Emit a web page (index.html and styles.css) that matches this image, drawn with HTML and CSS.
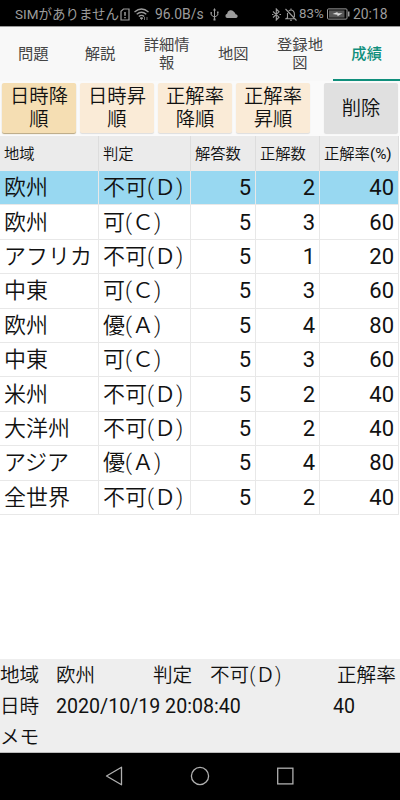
FILE: index.html
```html
<!DOCTYPE html>
<html lang="ja">

<head>
    <meta charset="UTF-8">
    <meta name="viewport" content="width=device-width, initial-scale=1.0">
    <title>成績</title>
    <link rel="stylesheet" href="styles.css">
</head>

<body>
    <header class="status">
        <span class="carrier">SIMがありません</span>
        <svg class="sim" width="10" height="13" viewBox="0 0 10 13" fill="none" stroke="#9c9c9c" stroke-width="1.2">
            <path d="M1 3.2V12h8V1H3.5z" />
            <path d="M5 4v3.7M5 9v1.3" stroke-width="1.5" />
        </svg>
        <svg class="wifi" width="15" height="12" viewBox="0 0 15 12" fill="none" stroke="#9c9c9c" stroke-width="1.3">
            <path d="M.5 4q7-6 14 0M2.7 6.3q4.8-4.2 9.6 0M4.8 8.4q2.7-2.2 5.4 0" />
            <path d="M6 10l1.5 1.6L9 10q-1.5-1-3 0zM10.5 9v3M13 9v3" fill="#9c9c9c" stroke-width=".7" />
        </svg>
        <span class="speed">96.0B/s</span>
        <svg class="usb" width="9" height="13" viewBox="0 0 9 13" fill="none" stroke="#9c9c9c">
            <path d="M4.5 2v9M1.2 5v2l3.3 2.3L7.8 7V4.5" />
            <path d="M3 2.5L4.5 0 6 2.5zM3.5 10.5h2v2h-2zM.5 4h1.4v1.4H.5zM7.1 3.5h1.4v1.4H7.1z" fill="#9c9c9c" stroke="none" />
        </svg>
        <svg class="cloud" width="13" height="8" viewBox="0 0 13 8" fill="#9c9c9c">
            <path d="M2.2 8a2.2 2.2 0 0 1-.1-4.3A3.8 3.8 0 0 1 9.1 2a3 3 0 0 1 1.4 2.3A1.9 1.9 0 0 1 11.3 8z" />
        </svg>
        <svg class="bluetooth" width="9" height="13" viewBox="0 0 9 13" fill="none" stroke="#9c9c9c" stroke-width="1.1">
            <path d="M1 3.5l6 5.7-2.7 2.8V1L7 3.8 1 9.5M0 6.5h1.5M7.5 6.5H9" />
        </svg>
        <svg class="bell" width="12" height="13" viewBox="0 0 12 13" fill="none" stroke="#9c9c9c" stroke-width="1.1">
            <path d="M3.8 2.9Q6 1 8.2 2.9 9.4 4 9.4 6v3M2.5 5v4.6L1 10.7h9.5M5 12.2h2M6 .5V2M.5 1l11 11.5" />
        </svg>
        <span class="percent">83%</span>
        <svg class="battery" width="23" height="12" viewBox="0 0 23 12">
            <rect x=".5" y=".9" width="19.5" height="10.2" rx="1" fill="none" stroke="#9c9c9c" />
            <rect x="2" y="2.4" width="15.5" height="7.2" fill="#555" />
            <path d="M5.5 6l5-2v1.3h5l-5 2.9V6.8z" fill="#ddd" />
            <path d="M21 3.5h1.5v5H21z" fill="#9c9c9c" />
        </svg>
        <span class="clock">20:18</span>
    </header>

    <nav class="tabs">
        <a class="tab">問題</a>
        <a class="tab">解説</a>
        <a class="tab">詳細情<br>報</a>
        <a class="tab">地図</a>
        <a class="tab">登録地<br>図</a>
        <a class="tab active">成績</a>
    </nav>

    <div class="buttons">
        <button class="sort selected" type="button">日時降<br>順</button>
        <button class="sort" type="button">日時昇<br>順</button>
        <button class="sort" type="button">正解率<br>降順</button>
        <button class="sort" type="button">正解率<br>昇順</button>
        <button class="delete" type="button">削除</button>
    </div>

    <main>
        <table class="results">
            <colgroup>
                <col class="col-area">
                <col class="col-grade">
                <col class="col-answers">
                <col class="col-correct">
                <col class="col-rate">
            </colgroup>
            <thead>
                <tr><th>地域</th><th>判定</th><th>解答数</th><th>正解数</th><th>正解率<span class="unit">(%)</span></th></tr>
            </thead>
            <tbody>
                <tr class="current"><td>欧州</td><td>不可(&#xFF24;)</td><td>5</td><td>2</td><td>40</td></tr>
                <tr><td>欧州</td><td>可(&#xFF23;)</td><td>5</td><td>3</td><td>60</td></tr>
                <tr><td>アフリカ</td><td>不可(&#xFF24;)</td><td>5</td><td>1</td><td>20</td></tr>
                <tr><td>中東</td><td>可(&#xFF23;)</td><td>5</td><td>3</td><td>60</td></tr>
                <tr><td>欧州</td><td>優(&#xFF21;)</td><td>5</td><td>4</td><td>80</td></tr>
                <tr><td>中東</td><td>可(&#xFF23;)</td><td>5</td><td>3</td><td>60</td></tr>
                <tr><td>米州</td><td>不可(&#xFF24;)</td><td>5</td><td>2</td><td>40</td></tr>
                <tr><td>大洋州</td><td>不可(&#xFF24;)</td><td>5</td><td>2</td><td>40</td></tr>
                <tr><td>アジア</td><td>優(&#xFF21;)</td><td>5</td><td>4</td><td>80</td></tr>
                <tr><td>全世界</td><td>不可(&#xFF24;)</td><td>5</td><td>2</td><td>40</td></tr>
            </tbody>
        </table>
    </main>

    <section class="detail">
        <div class="detail-row">
            <span class="label">地域</span>
            <span class="area">欧州</span>
            <span class="label-grade">判定</span>
            <span class="grade">不可(&#xFF24;)</span>
            <span class="label-rate">正解率</span>
        </div>
        <div class="detail-row">
            <span class="label">日時</span>
            <span class="date">2020/10/19 20:08:40</span>
            <span class="rate">40</span>
        </div>
        <div class="detail-row">
            <span class="label">メモ</span>
        </div>
    </section>

    <footer class="navbar">
        <svg width="18" height="20" viewBox="0 0 18 20" fill="none" stroke="#b0b0b0" stroke-width="1.3" stroke-linejoin="round">
            <path d="M1.5 10L16.5 1.2v17.6z" />
        </svg>
        <svg width="20" height="20" viewBox="0 0 20 20" fill="none" stroke="#b0b0b0" stroke-width="1.3">
            <circle cx="10" cy="10" r="8.6" />
        </svg>
        <svg width="18" height="20" viewBox="0 0 18 20" fill="none" stroke="#b0b0b0" stroke-width="1.3">
            <rect x=".7" y="2.2" width="15.2" height="15.7" />
        </svg>
    </footer>
</body>

</html>
```

FILE: styles.css
```css
* {
    box-sizing: border-box;
}

body {
    margin: 0;
    height: 800px;
    display: flex;
    flex-direction: column;
    overflow: hidden;
    background-color: #ffffff;
    color: #111111;
    font-family: Roboto, "Noto Sans CJK JP", sans-serif;
}

.status {
    flex: none;
    display: flex;
    align-items: center;
    height: 26px;
    padding: 2px 13px 0 15px;
    background-color: #000000;
    color: #9c9c9c;
    font-size: 13.9px;
    line-height: 24px;
    white-space: nowrap;
}

.status svg {
    flex: none;
}

.carrier {
    width: 105px;
    font-size: 13.5px;
}

.wifi {
    margin-left: 4px;
}

.speed {
    width: 47px;
    margin-left: 6px;
}

.usb {
    margin-left: 8px;
}

.cloud {
    margin-left: 6px;
}

.bluetooth {
    margin-left: 34px;
}

.bell {
    margin-left: 4px;
}

.percent {
    width: 26px;
    margin-left: 2px;
    font-size: 13.3px;
}

.battery {
    margin-left: 2px;
}

.clock {
    width: 34px;
    margin-left: auto;
    font-size: 13.9px;
}

.tabs {
    flex: none;
    display: grid;
    grid-template-columns: repeat(6, 1fr);
    height: 55px;
    background-color: #f8f8f8;
    border-top: 1px solid #999999;
}

.tab {
    display: flex;
    align-items: center;
    justify-content: center;
    padding-top: 2px;
    border-bottom: 2px solid transparent;
    color: #444444;
    font-size: 15.3px;
    line-height: 18px;
    text-align: center;
}

.active {
    border-bottom-color: #108f7c;
    color: #108f7c;
    font-weight: 500;
}

.buttons {
    flex: none;
    display: flex;
    gap: 4px;
    height: 55px;
    padding: 2px 2px 3px;
    background-color: #fafafa;
}

button {
    width: 74px;
    height: 50px;
    padding: 0;
    border: none;
    border-radius: 2px;
    color: #111111;
    font-family: inherit;
    font-size: 19.3px;
    font-weight: 350;
    line-height: 23px;
    box-shadow: 0 1px 1px #dddddd;
}

.sort {
    background-color: #faebd7;
}

.selected {
    background-color: #f5deb3;
    box-shadow: 0 1px 1px #b8a67f;
}

.delete {
    margin-left: auto;
    background-color: #e0e0e0;
}

main {
    flex: 1;
}

.results {
    width: 399px;
    table-layout: fixed;
    border-collapse: separate;
    border-spacing: 0;
}

.col-area {
    width: 99px;
}

.col-grade {
    width: 92px;
}

.col-answers {
    width: 65px;
}

.col-correct {
    width: 64px;
}

th,
td {
    padding: 0 4px;
    border-right: 1px solid #e8e8e8;
    border-bottom: 1px solid #e8e8e8;
    white-space: nowrap;
    overflow: hidden;
}

th {
    height: 35px;
    background-color: #ebebeb;
    border-right-color: #dddddd;
    border-bottom: none;
    font-size: 15.3px;
    font-weight: 350;
    line-height: 34px;
    text-align: left;
}

.unit {
    font-weight: 400;
}

td {
    height: 34.4px;
    font-size: 22px;
    font-weight: 350;
    line-height: 33px;
}

td:nth-child(n+3) {
    font-weight: 400;
    text-align: right;
}

.current td {
    background-color: #98d8f1;
}

.detail {
    flex: none;
    height: 94px;
    padding-top: 1px;
    background-color: #eeeeee;
    border-bottom: 1px solid #bbbbbb;
    font-size: 19.6px;
    font-weight: 350;
}

.detail-row {
    display: flex;
    height: 31px;
    line-height: 31px;
    white-space: nowrap;
}

.label {
    width: 56px;
}

.area {
    width: 97px;
}

.label-grade {
    width: 57px;
}

.grade {
    width: 127px;
}

.date {
    width: 277px;
    font-weight: 400;
}

.rate {
    font-weight: 400;
}

.navbar {
    flex: none;
    display: flex;
    justify-content: center;
    gap: 67px;
    height: 47px;
    padding-top: 13px;
    background-color: #000000;
}
```
